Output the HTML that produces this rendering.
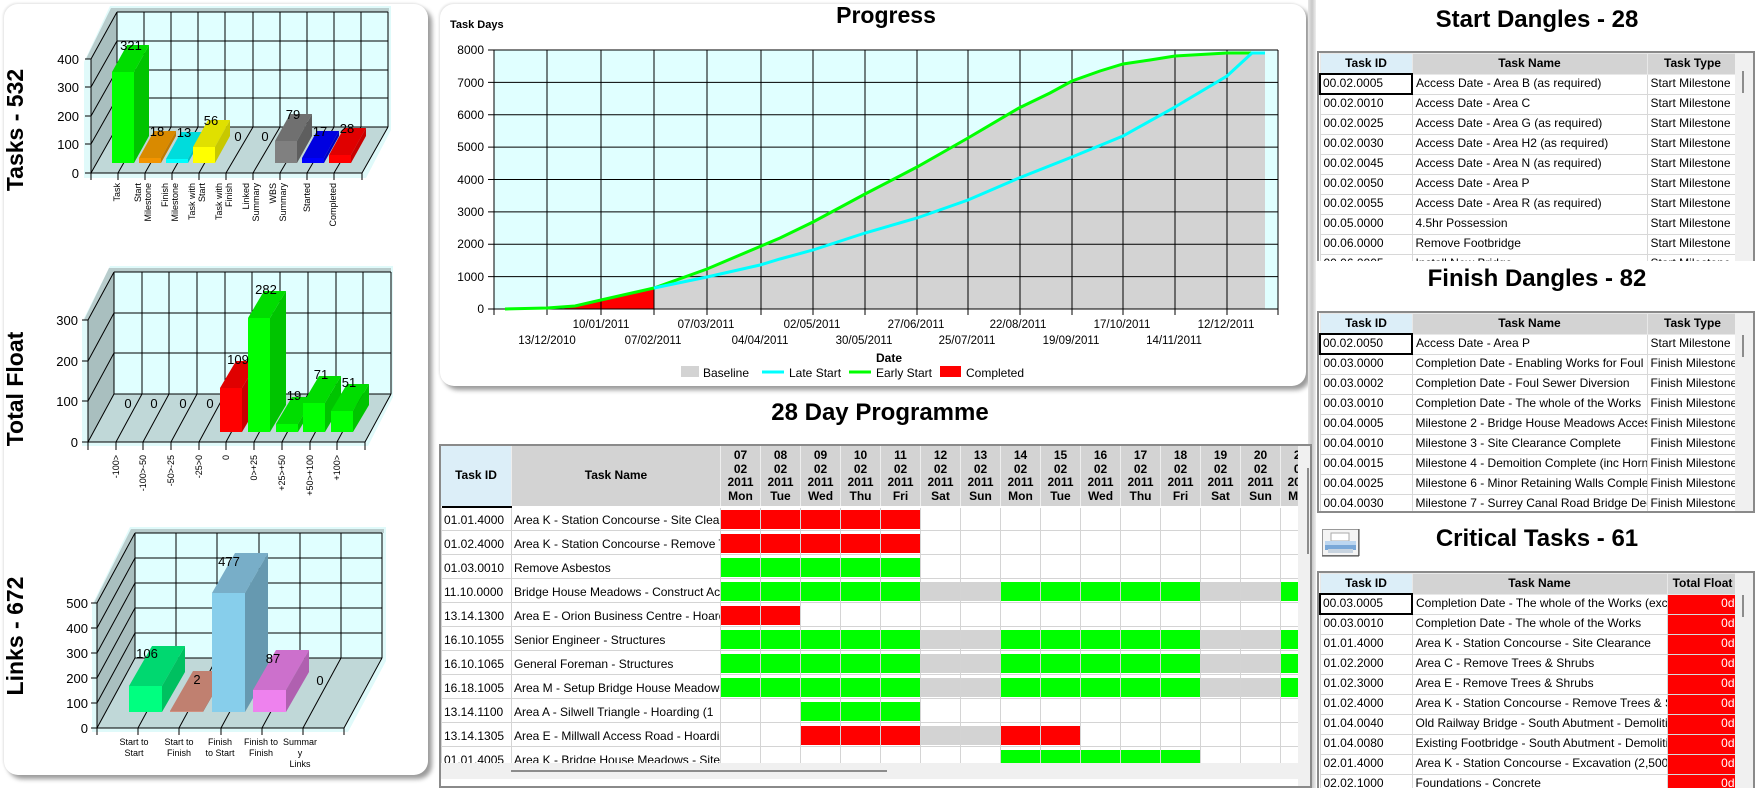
<!DOCTYPE html>
<html><head><meta charset="utf-8">
<style>
*{margin:0;padding:0;box-sizing:border-box}
body{width:1757px;height:788px;overflow:hidden;background:#fff;font-family:"Liberation Sans",Arial,sans-serif;position:relative}
.abs{position:absolute}
.panel{position:absolute;background:#fff;border-radius:14px;box-shadow:4px 4px 5px #9a9a9a, -1px -1px 2px #e4e4e4}
.title{position:absolute;font-weight:bold;font-size:24px;text-align:center;color:#000;white-space:nowrap}
.gt{border-collapse:separate;border-spacing:0;table-layout:fixed;font-size:12px}
.gt td{padding:0;white-space:nowrap;overflow:hidden;height:24px;border-left:1px solid #d4d4d4;
 background:linear-gradient(#fff 0 2px,var(--c,#fff) 2px 21px,#fff 21px 22px,#d4d4d4 22px 23px,#fff 23px);vertical-align:top;line-height:24px;padding-left:2px}
.gt td.r{--c:#ff0000}.gt td.g{--c:#00ff00}.gt td.s{--c:#d3d3d3}
.hd{border-collapse:separate;border-spacing:0;table-layout:fixed;font-size:12px;font-weight:bold;text-align:center}
.hd td{background:#d3d3d3;border-left:1px solid #eee;height:60px;line-height:13.5px;padding:0;overflow:hidden}
.rt{border-collapse:collapse;table-layout:fixed;font-size:12px;width:418px}
.rt td{height:20px;border:1px solid #d8d8d8;padding:0 0 0 3px;white-space:nowrap;overflow:hidden;line-height:17px;vertical-align:top}
.rt tr.h td{background:#d3d3d3;font-weight:bold;text-align:center;padding:0;border-color:#e8e8e8;line-height:19px}
.rt tr.h td:first-child{background:#dceef8}
.rt td.sel{border:2px solid #000;padding-left:2px}
.rt td.f{background:#ff0000;color:#fff;text-align:right;padding-right:3px}
.box{position:absolute;border:2px solid #8a8a8a;overflow:hidden;background:#fff}
.sb{position:absolute;right:0;top:0;bottom:0;width:18px;background:#f0f0f0}
</style></head><body>

<!-- Left panel -->
<div class="panel" style="left:4px;top:4px;width:424px;height:771px"></div>
<svg class="abs" style="left:0;top:0" width="440" height="788" font-family="Liberation Sans, Arial, sans-serif">
<g font-weight="bold" font-size="23" text-anchor="middle">
<text transform="translate(23,130) rotate(-90)">Tasks - 532</text>
<text transform="translate(23,389) rotate(-90)">Total Float</text>
<text transform="translate(23,636) rotate(-90)">Links - 672</text>
</g>
<!-- Tasks chart -->
<polygon points="84,62 110,6 391,6 391,130 366,178 84,178" fill="#e0fafa"/>
<polygon points="86,59 111,8 389,8 389,12 117,12 91,59" fill="#b8cccc"/>
<polygon points="91,59 117,12 117,127 91,173" fill="#a9bfbf"/>
<rect x="117" y="12" width="271" height="115" fill="#e0ffff"/>
<polygon points="91,173 117,127 388,127 362,173" fill="#c0d8d8"/>
<g stroke="#000" stroke-width="1" fill="none">
<path d="M117 12H388M117 41H388M117 70H388M117 98H388M117 127H388"/>
<path d="M117 12V127M144 12V127M171 12V127M198 12V127M225 12V127M253 12V127M280 12V127M307 12V127M334 12V127M361 12V127M388 12V127"/>
<path d="M91 173L117 127M91 144L117 98M91 116L117 70M91 87L117 41M91 59L117 12M91 59V180"/>
<path d="M118 173L144 127M145 173L171 127M172 173L198 127M199 173L225 127M226 173L253 127M253 173L280 127M280 173L307 127M307 173L334 127M334 173L361 127M362 173L388 127"/>
<path d="M91 173H362M118 173V180M145 173V180M172 173V180M199 173V180M226 173V180M253 173V180M280 173V180M307 173V180M334 173V180M362 173V180"/>
<path d="M85 173H91M85 144H91M85 116H91M85 87H91M85 59H91"/>
</g>
<g font-size="13" text-anchor="end"><text x="79" y="178">0</text><text x="79" y="149">100</text><text x="79" y="121">200</text><text x="79" y="92">300</text><text x="79" y="64">400</text></g>
<!-- task bars -->
<rect x="112" y="72" width="22" height="91" fill="#00ff00"/><polygon points="112,72 127,45 149,45 134,72" fill="#00dd00"/><polygon points="134,72 149,45 149,136 134,163" fill="#00c400"/>
<rect x="139" y="158" width="22" height="5" fill="#f29400"/><polygon points="139,158 154,131 176,131 161,158" fill="#d98a00"/><polygon points="161,158 176,131 176,136 161,163" fill="#c07800"/>
<rect x="166" y="159" width="22" height="4" fill="#00ffff"/><polygon points="166,159 181,132 203,132 188,159" fill="#00dcdc"/><polygon points="188,159 203,132 203,136 188,163" fill="#00c0c0"/>
<rect x="193" y="147" width="22" height="16" fill="#ffff00"/><polygon points="193,147 208,120 230,120 215,147" fill="#e0e000"/><polygon points="215,147 230,120 230,136 215,163" fill="#c8c800"/>
<rect x="275" y="141" width="22" height="22" fill="#808080"/><polygon points="275,141 290,114 312,114 297,141" fill="#707070"/><polygon points="297,141 312,114 312,136 297,163" fill="#5e5e5e"/>
<rect x="302" y="158" width="22" height="5" fill="#0000ff"/><polygon points="302,158 317,131 339,131 324,158" fill="#0000e0"/><polygon points="324,158 339,131 339,136 324,163" fill="#0000c0"/>
<rect x="329" y="155" width="22" height="8" fill="#ff0000"/><polygon points="329,155 344,128 366,128 351,155" fill="#e00000"/><polygon points="351,155 366,128 366,136 351,163" fill="#c80000"/>
<g font-size="13" text-anchor="middle"><text x="131" y="50">321</text><text x="157" y="136">18</text><text x="184" y="137">13</text><text x="211" y="125">56</text><text x="238" y="141">0</text><text x="265" y="141">0</text><text x="293" y="119">79</text><text x="320" y="136">17</text><text x="347" y="133">28</text></g>
<g font-size="9" text-anchor="end">
<text transform="translate(120,183) rotate(-90)">Task</text>
<text transform="translate(141,183) rotate(-90)">Start</text><text transform="translate(151,183) rotate(-90)">Milestone</text>
<text transform="translate(168,183) rotate(-90)">Finish</text><text transform="translate(178,183) rotate(-90)">Milestone</text>
<text transform="translate(195,183) rotate(-90)">Task with</text><text transform="translate(205,183) rotate(-90)">Start</text>
<text transform="translate(222,183) rotate(-90)">Task with</text><text transform="translate(232,183) rotate(-90)">Finish</text>
<text transform="translate(249,183) rotate(-90)">Linked</text><text transform="translate(259,183) rotate(-90)">Summary</text>
<text transform="translate(276,183) rotate(-90)">WBS</text><text transform="translate(286,183) rotate(-90)">Summary</text>
<text transform="translate(310,183) rotate(-90)">Started</text>
<text transform="translate(336,183) rotate(-90)">Completed</text>
</g>

<!-- Total float chart -->
<polygon points="82,322 110,266 393,266 393,397 368,446 82,446" fill="#e0fafa"/>
<polygon points="84,320 109,268 391,268 391,272 114,272 88,320" fill="#b8cccc"/>
<polygon points="88,320 114,272 114,394 88,442" fill="#a9bfbf"/>
<rect x="114" y="272" width="277" height="122" fill="#e0ffff"/>
<polygon points="88,442 114,394 391,394 365,442" fill="#c0d8d8"/>
<g stroke="#000" fill="none">
<path d="M114 272H391M114 313H391M114 353H391M114 394H391"/>
<path d="M114 272V394M142 272V394M169 272V394M197 272V394M225 272V394M252 272V394M280 272V394M308 272V394M336 272V394M363 272V394M391 272V394"/>
<path d="M88 442L114 394M88 401L114 353M88 361L114 313M88 320L114 272M88 320V450"/>
<path d="M116 442L142 394M143 442L169 394M171 442L197 394M199 442L225 394M226 442L252 394M254 442L280 394M282 442L308 394M310 442L336 394M337 442L363 394M365 442L391 394"/>
<path d="M88 442H365M116 442V450M143 442V450M171 442V450M199 442V450M226 442V450M254 442V450M282 442V450M310 442V450M337 442V450M365 442V450"/>
<path d="M82 442H88M82 401H88M82 361H88M82 320H88"/>
</g>
<g font-size="13" text-anchor="end"><text x="78" y="447">0</text><text x="78" y="406">100</text><text x="78" y="366">200</text><text x="78" y="325">300</text></g>
<rect x="220" y="388" width="22" height="44" fill="#ff0000"/><polygon points="220,388 236,361 258,361 242,388" fill="#e00000"/><polygon points="242,388 258,361 258,405 242,432" fill="#c80000"/>
<rect x="248" y="318" width="22" height="114" fill="#00ff00"/><polygon points="248,318 264,291 286,291 270,318" fill="#00dd00"/><polygon points="270,318 286,291 286,405 270,432" fill="#00c400"/>
<rect x="276" y="424" width="22" height="8" fill="#00ff00"/><polygon points="276,424 292,397 314,397 298,424" fill="#00dd00"/><polygon points="298,424 314,397 314,405 298,432" fill="#00c400"/>
<rect x="303" y="403" width="22" height="29" fill="#00ff00"/><polygon points="303,403 319,376 341,376 325,403" fill="#00dd00"/><polygon points="325,403 341,376 341,405 325,432" fill="#00c400"/>
<rect x="331" y="411" width="22" height="21" fill="#00ff00"/><polygon points="331,411 347,384 369,384 353,411" fill="#00dd00"/><polygon points="353,411 369,384 369,405 353,432" fill="#00c400"/>
<g font-size="13" text-anchor="middle"><text x="128" y="408">0</text><text x="154" y="408">0</text><text x="183" y="408">0</text><text x="210" y="408">0</text><text x="238" y="364">109</text><text x="266" y="294">282</text><text x="294" y="400">19</text><text x="321" y="379">71</text><text x="349" y="387">51</text></g>
<g font-size="9" text-anchor="end">
<text transform="translate(119,455) rotate(-90)">-100&gt;</text>
<text transform="translate(146,455) rotate(-90)">-100&gt;-50</text>
<text transform="translate(174,455) rotate(-90)">-50&gt;-25</text>
<text transform="translate(202,455) rotate(-90)">-25&gt;0</text>
<text transform="translate(229,455) rotate(-90)">0</text>
<text transform="translate(257,455) rotate(-90)">0&gt;+25</text>
<text transform="translate(285,455) rotate(-90)">+25&gt;+50</text>
<text transform="translate(313,455) rotate(-90)">+50&gt;+100</text>
<text transform="translate(340,455) rotate(-90)">+100&gt;</text>
</g>

<!-- Links chart -->
<polygon points="92,605 130,527 386,527 386,661 348,732 92,732" fill="#e0fafa"/>
<polygon points="94,603 131,529 384,529 384,533 135,533 97,603" fill="#b8cccc"/>
<polygon points="97,603 135,533 135,658 97,728" fill="#a9bfbf"/>
<rect x="135" y="533" width="247" height="125" fill="#e0ffff"/>
<polygon points="97,728 135,658 382,658 344,728" fill="#c0d8d8"/>
<g stroke="#000" fill="none">
<path d="M135 533H382M135 558H382M135 583H382M135 608H382M135 633H382M135 658H382"/>
<path d="M135 533V658M176 533V658M217 533V658M259 533V658M300 533V658M341 533V658M382 533V658"/>
<path d="M97 728L135 658M97 703L135 633M97 678L135 608M97 653L135 583M97 628L135 558M97 603L135 533M97 603V735"/>
<path d="M138 728L176 658M179 728L217 658M221 728L259 658M262 728L300 658M303 728L341 658M344 728L382 658"/>
<path d="M97 728H344M138 728V735M179 728V735M221 728V735M262 728V735M303 728V735M344 728V735"/>
<path d="M91 728H97M91 703H97M91 678H97M91 653H97M91 628H97M91 603H97"/>
</g>
<g font-size="13" text-anchor="end"><text x="88" y="733">0</text><text x="88" y="708">100</text><text x="88" y="683">200</text><text x="88" y="658">300</text><text x="88" y="633">400</text><text x="88" y="608">500</text></g>
<rect x="129" y="686" width="33" height="26" fill="#00ff80"/><polygon points="129,686 152,646 185,646 162,686" fill="#00d870"/><polygon points="162,686 185,646 185,672 162,712" fill="#00c060"/>
<rect x="170" y="711" width="33" height="1" fill="#d09080"/><polygon points="170,711 193,671 226,671 203,711" fill="#c08070"/><polygon points="203,711 226,671 226,672 203,712" fill="#a86858"/>
<rect x="212" y="593" width="33" height="119" fill="#87ceeb"/><polygon points="212,593 235,553 268,553 245,593" fill="#78aec8"/><polygon points="245,593 268,553 268,672 245,712" fill="#6699b0"/>
<rect x="253" y="690" width="33" height="22" fill="#ee82ee"/><polygon points="253,690 276,650 309,650 286,690" fill="#cc70cc"/><polygon points="286,690 309,650 309,672 286,712" fill="#b060b0"/>
<g font-size="13" text-anchor="middle"><text x="147" y="658">106</text><text x="197" y="684">2</text><text x="229" y="566">477</text><text x="273" y="663">87</text><text x="320" y="685">0</text></g>
<g font-size="9" text-anchor="middle">
<text x="134" y="745">Start to</text><text x="134" y="756">Start</text>
<text x="179" y="745">Start to</text><text x="179" y="756">Finish</text>
<text x="220" y="745">Finish</text><text x="220" y="756">to Start</text>
<text x="261" y="745">Finish to</text><text x="261" y="756">Finish</text>
<text x="300" y="745">Summar</text><text x="300" y="756">y</text><text x="300" y="767">Links</text>
</g>
</svg>

<!-- Progress panel -->
<div class="panel" style="left:440px;top:4px;width:866px;height:382px"></div>
<svg class="abs" style="left:0;top:0" width="1310" height="390" font-family="Liberation Sans, Arial, sans-serif">
<text x="886" y="23" font-size="23" font-weight="bold" text-anchor="middle">Progress</text>
<text x="450" y="28" font-size="11" font-weight="bold">Task Days</text>
<rect x="494" y="50" width="784" height="259" fill="#e0ffff"/>
<polygon points="505,309 547,308 575,306 601,300 654,288 707,269 747,252 780,238 813,222 865,194 917,167 968,138 1019,108 1050,93 1072,81 1100,71 1123,64 1150,60 1175,56 1227,53 1265,53 1265,309" fill="#d3d3d3"/>
<polygon points="560,309 575,306 601,300 630,294 654,288 654,309" fill="#ff0000"/>
<g stroke="#000" fill="none">
<path d="M494 50H1278M494 82.4H1278M494 114.8H1278M494 147.1H1278M494 179.5H1278M494 211.9H1278M494 244.3H1278M494 276.6H1278M494 309H1278"/>
<path d="M494 50V315M547 50V315M601 50V315M654 50V315M707 50V315M761 50V315M813 50V315M865 50V315M917 50V315M968 50V315M1020 50V315M1072 50V315M1123 50V315M1175 50V315M1227 50V315M1278 50V315"/>
<path d="M488 50H494M488 82.4H494M488 114.8H494M488 147.1H494M488 179.5H494M488 211.9H494M488 244.3H494M488 276.6H494M488 309H494"/>
</g>
<polyline points="505,309 547,308 575,306 601,300 654,288 707,269 747,252 780,238 813,222 865,194 917,167 968,138 1019,108 1050,93 1072,81 1100,71 1123,64 1150,60 1175,56 1227,53 1265,53" fill="none" stroke="#00ff00" stroke-width="3"/>
<polyline points="654,288 707,277 760,265 780,259 813,250 865,233 917,218 968,200 1019,178 1072,157 1123,136 1175,107 1227,76 1252,53 1265,53" fill="none" stroke="#00ffff" stroke-width="3"/>
<g font-size="12" text-anchor="end"><text x="484" y="54">8000</text><text x="484" y="87">7000</text><text x="484" y="119">6000</text><text x="484" y="151">5000</text><text x="484" y="184">4000</text><text x="484" y="216">3000</text><text x="484" y="248">2000</text><text x="484" y="281">1000</text><text x="484" y="313">0</text></g>
<g font-size="11.5" text-anchor="middle">
<text x="601" y="328">10/01/2011</text><text x="706" y="328">07/03/2011</text><text x="812" y="328">02/05/2011</text><text x="916" y="328">27/06/2011</text><text x="1018" y="328">22/08/2011</text><text x="1122" y="328">17/10/2011</text><text x="1226" y="328">12/12/2011</text>
<text x="547" y="344">13/12/2010</text><text x="653" y="344">07/02/2011</text><text x="760" y="344">04/04/2011</text><text x="864" y="344">30/05/2011</text><text x="967" y="344">25/07/2011</text><text x="1071" y="344">19/09/2011</text><text x="1174" y="344">14/11/2011</text>
</g>
<text x="889" y="362" font-size="12" font-weight="bold" text-anchor="middle">Date</text>
<rect x="681" y="366" width="18" height="11" fill="#d3d3d3"/><text x="703" y="377" font-size="12">Baseline</text>
<line x1="762" y1="372" x2="784" y2="372" stroke="#00ffff" stroke-width="3"/><text x="789" y="377" font-size="12">Late Start</text>
<line x1="849" y1="372" x2="871" y2="372" stroke="#00ff00" stroke-width="3"/><text x="876" y="377" font-size="12">Early Start</text>
<rect x="940" y="366" width="21" height="11" fill="#ff0000"/><text x="966" y="377" font-size="12">Completed</text>
</svg>

<!-- separator strip -->
<div class="abs" style="left:1308px;top:0;width:8px;height:788px;background:linear-gradient(90deg,#e6e6e6,#c8c8c8,#eeeeee)"></div>

<!-- 28 day programme -->
<div class="title" style="left:700px;top:399px;width:360px">28 Day Programme</div>
<div class="box" style="left:439px;top:444px;width:873px;height:344px">
 <table class="hd" style="position:absolute;left:0;top:0;width:879px">
  <colgroup><col style="width:70px"><col style="width:209px"><col span="15" style="width:40px"></colgroup>
  <tr><td style="background:#dceef8;border-left:0">Task ID</td><td>Task Name</td>
  <td>07<br>02<br>2011<br>Mon</td><td>08<br>02<br>2011<br>Tue</td><td>09<br>02<br>2011<br>Wed</td><td>10<br>02<br>2011<br>Thu</td><td>11<br>02<br>2011<br>Fri</td><td>12<br>02<br>2011<br>Sat</td><td>13<br>02<br>2011<br>Sun</td><td>14<br>02<br>2011<br>Mon</td><td>15<br>02<br>2011<br>Tue</td><td>16<br>02<br>2011<br>Wed</td><td>17<br>02<br>2011<br>Thu</td><td>18<br>02<br>2011<br>Fri</td><td>19<br>02<br>2011<br>Sat</td><td>20<br>02<br>2011<br>Sun</td><td>21<br>02<br>2011<br>Mon</td></tr>
 </table>
 <div class="abs" style="left:1px;top:60px;width:70px;height:3px;background:#000"></div>
 <table class="gt" style="position:absolute;left:0;top:62px;width:879px">
  <colgroup><col style="width:70px"><col style="width:209px"><col span="15" style="width:40px"></colgroup>
  <tr><td>01.01.4000</td><td>Area K - Station Concourse - Site Clearance</td><td class="r"></td><td class="r"></td><td class="r"></td><td class="r"></td><td class="r"></td><td></td><td></td><td></td><td></td><td></td><td></td><td></td><td></td><td></td><td></td></tr>
  <tr><td>01.02.4000</td><td>Area K - Station Concourse - Remove Trees</td><td class="r"></td><td class="r"></td><td class="r"></td><td class="r"></td><td class="r"></td><td></td><td></td><td></td><td></td><td></td><td></td><td></td><td></td><td></td><td></td></tr>
  <tr><td>01.03.0010</td><td>Remove Asbestos</td><td class="g"></td><td class="g"></td><td class="g"></td><td class="g"></td><td class="g"></td><td></td><td></td><td></td><td></td><td></td><td></td><td></td><td></td><td></td><td></td></tr>
  <tr><td>11.10.0000</td><td>Bridge House Meadows - Construct Access</td><td class="g"></td><td class="g"></td><td class="g"></td><td class="g"></td><td class="g"></td><td class="s"></td><td class="s"></td><td class="g"></td><td class="g"></td><td class="g"></td><td class="g"></td><td class="g"></td><td class="s"></td><td class="s"></td><td class="g"></td></tr>
  <tr><td>13.14.1300</td><td>Area E - Orion Business Centre - Hoarding</td><td class="r"></td><td class="r"></td><td></td><td></td><td></td><td></td><td></td><td></td><td></td><td></td><td></td><td></td><td></td><td></td><td></td></tr>
  <tr><td>16.10.1055</td><td>Senior Engineer - Structures</td><td class="g"></td><td class="g"></td><td class="g"></td><td class="g"></td><td class="g"></td><td class="s"></td><td class="s"></td><td class="g"></td><td class="g"></td><td class="g"></td><td class="g"></td><td class="g"></td><td class="s"></td><td class="s"></td><td class="g"></td></tr>
  <tr><td>16.10.1065</td><td>General Foreman - Structures</td><td class="g"></td><td class="g"></td><td class="g"></td><td class="g"></td><td class="g"></td><td class="s"></td><td class="s"></td><td class="g"></td><td class="g"></td><td class="g"></td><td class="g"></td><td class="g"></td><td class="s"></td><td class="s"></td><td class="g"></td></tr>
  <tr><td>16.18.1005</td><td>Area M - Setup Bridge House Meadows</td><td class="g"></td><td class="g"></td><td class="g"></td><td class="g"></td><td class="g"></td><td class="s"></td><td class="s"></td><td class="g"></td><td class="g"></td><td class="g"></td><td class="g"></td><td class="g"></td><td class="s"></td><td class="s"></td><td class="g"></td></tr>
  <tr><td>13.14.1100</td><td>Area A - Silwell Triangle - Hoarding (1</td><td></td><td></td><td class="g"></td><td class="g"></td><td class="g"></td><td></td><td></td><td></td><td></td><td></td><td></td><td></td><td></td><td></td><td></td></tr>
  <tr><td>13.14.1305</td><td>Area E - Millwall Access Road - Hoarding</td><td></td><td></td><td class="r"></td><td class="r"></td><td class="r"></td><td class="s"></td><td class="s"></td><td class="r"></td><td class="r"></td><td></td><td></td><td></td><td></td><td></td><td></td></tr>
  <tr><td>01.01.4005</td><td>Area K - Bridge House Meadows - Site</td><td></td><td></td><td></td><td></td><td></td><td></td><td></td><td class="g"></td><td class="g"></td><td class="g"></td><td class="g"></td><td class="g"></td><td></td><td></td><td></td></tr>
 </table>
 <div class="abs" style="left:0;top:317px;width:857px;height:16px;background:#f0f0f0"></div>
 <div class="abs" style="left:70px;top:324px;width:376px;height:2px;background:#8c8c8c"></div>
 <div class="abs" style="left:857px;top:0;width:14px;height:340px;background:#f0f0f0"></div>
 <div class="abs" style="left:866px;top:22px;width:2px;height:86px;background:#8c8c8c"></div>
</div>

<!-- Start Dangles -->
<div class="title" style="left:1330px;top:6px;width:414px">Start Dangles - 28</div>
<div class="box" style="left:1317px;top:51px;width:438px;height:210px;border-width:2px 2px 0 2px">
 <div class="sb"><div style="position:absolute;left:7px;top:18px;width:2px;height:22px;background:#8c8c8c"></div></div>
 <table class="rt">
  <colgroup><col style="width:92px"><col style="width:235px"><col style="width:91px"></colgroup>
  <tr class="h"><td>Task ID</td><td>Task Name</td><td>Task Type</td></tr>
  <tr><td class="sel">00.02.0005</td><td>Access Date - Area B (as required)</td><td>Start Milestone</td></tr>
  <tr><td>00.02.0010</td><td>Access Date - Area C</td><td>Start Milestone</td></tr>
  <tr><td>00.02.0025</td><td>Access Date - Area G (as required)</td><td>Start Milestone</td></tr>
  <tr><td>00.02.0030</td><td>Access Date - Area H2 (as required)</td><td>Start Milestone</td></tr>
  <tr><td>00.02.0045</td><td>Access Date - Area N (as required)</td><td>Start Milestone</td></tr>
  <tr><td>00.02.0050</td><td>Access Date - Area P</td><td>Start Milestone</td></tr>
  <tr><td>00.02.0055</td><td>Access Date - Area R (as required)</td><td>Start Milestone</td></tr>
  <tr><td>00.05.0000</td><td>4.5hr Possession</td><td>Start Milestone</td></tr>
  <tr><td>00.06.0000</td><td>Remove Footbridge</td><td>Start Milestone</td></tr>
  <tr><td>00.06.0005</td><td>Install New Bridge</td><td>Start Milestone</td></tr>
 </table>
</div>

<!-- Finish Dangles -->
<div class="title" style="left:1330px;top:265px;width:414px">Finish Dangles - 82</div>
<div class="box" style="left:1317px;top:311px;width:438px;height:202px">
 <div class="sb"><div style="position:absolute;left:7px;top:22px;width:2px;height:22px;background:#8c8c8c"></div></div>
 <table class="rt">
  <colgroup><col style="width:92px"><col style="width:235px"><col style="width:91px"></colgroup>
  <tr class="h"><td>Task ID</td><td>Task Name</td><td>Task Type</td></tr>
  <tr><td class="sel">00.02.0050</td><td>Access Date - Area P</td><td>Start Milestone</td></tr>
  <tr><td>00.03.0000</td><td>Completion Date - Enabling Works for Foul Sewer</td><td>Finish Milestone</td></tr>
  <tr><td>00.03.0002</td><td>Completion Date - Foul Sewer Diversion</td><td>Finish Milestone</td></tr>
  <tr><td>00.03.0010</td><td>Completion Date - The whole of the Works</td><td>Finish Milestone</td></tr>
  <tr><td>00.04.0005</td><td>Milestone 2 - Bridge House Meadows Access</td><td>Finish Milestone</td></tr>
  <tr><td>00.04.0010</td><td>Milestone 3 - Site Clearance Complete</td><td>Finish Milestone</td></tr>
  <tr><td>00.04.0015</td><td>Milestone 4 - Demoition Complete (inc Hornsey</td><td>Finish Milestone</td></tr>
  <tr><td>00.04.0025</td><td>Milestone 6 - Minor Retaining Walls Complete</td><td>Finish Milestone</td></tr>
  <tr><td>00.04.0030</td><td>Milestone 7 - Surrey Canal Road Bridge Deck</td><td>Finish Milestone</td></tr>
 </table>
</div>

<!-- Critical tasks -->
<svg class="abs" style="left:1322px;top:529px" width="38" height="28">
 <rect x="0.5" y="0.5" width="36" height="26" fill="#f4f4f4" stroke="#999"/>
 <rect x="9" y="4" width="18" height="8" fill="#fff" stroke="#aaa"/>
 <path d="M3 12H34V21H3Z" fill="#7aa8d8"/>
 <path d="M3 12H34V16H3Z" fill="#bcd6f0"/>
 <rect x="6" y="20" width="25" height="4" fill="#c8d4e0"/>
 <line x1="0" y1="27" x2="37" y2="27" stroke="#444"/><line x1="37" y1="0" x2="37" y2="27" stroke="#444"/>
</svg>
<div class="title" style="left:1330px;top:525px;width:414px">Critical Tasks - 61</div>
<div class="box" style="left:1317px;top:571px;width:438px;height:217px;border-bottom:0">
 <div class="sb"><div style="position:absolute;left:7px;top:22px;width:2px;height:22px;background:#8c8c8c"></div></div>
 <table class="rt">
  <colgroup><col style="width:92px"><col style="width:255px"><col style="width:71px"></colgroup>
  <tr class="h"><td>Task ID</td><td>Task Name</td><td>Total Float</td></tr>
  <tr><td class="sel">00.03.0005</td><td>Completion Date - The whole of the Works (excl</td><td class="f">0d</td></tr>
  <tr><td>00.03.0010</td><td>Completion Date - The whole of the Works</td><td class="f">0d</td></tr>
  <tr><td>01.01.4000</td><td>Area K - Station Concourse - Site Clearance</td><td class="f">0d</td></tr>
  <tr><td>01.02.2000</td><td>Area C - Remove Trees &amp; Shrubs</td><td class="f">0d</td></tr>
  <tr><td>01.02.3000</td><td>Area E - Remove Trees &amp; Shrubs</td><td class="f">0d</td></tr>
  <tr><td>01.02.4000</td><td>Area K - Station Concourse - Remove Trees &amp; Shrubs</td><td class="f">0d</td></tr>
  <tr><td>01.04.0040</td><td>Old Railway Bridge - South Abutment - Demolition</td><td class="f">0d</td></tr>
  <tr><td>01.04.0080</td><td>Existing Footbridge - South Abutment - Demolition</td><td class="f">0d</td></tr>
  <tr><td>02.01.4000</td><td>Area K - Station Concourse - Excavation (2,500m3)</td><td class="f">0d</td></tr>
  <tr><td>02.02.1000</td><td>Foundations - Concrete</td><td class="f">0d</td></tr>
 </table>
</div>
</body></html>
